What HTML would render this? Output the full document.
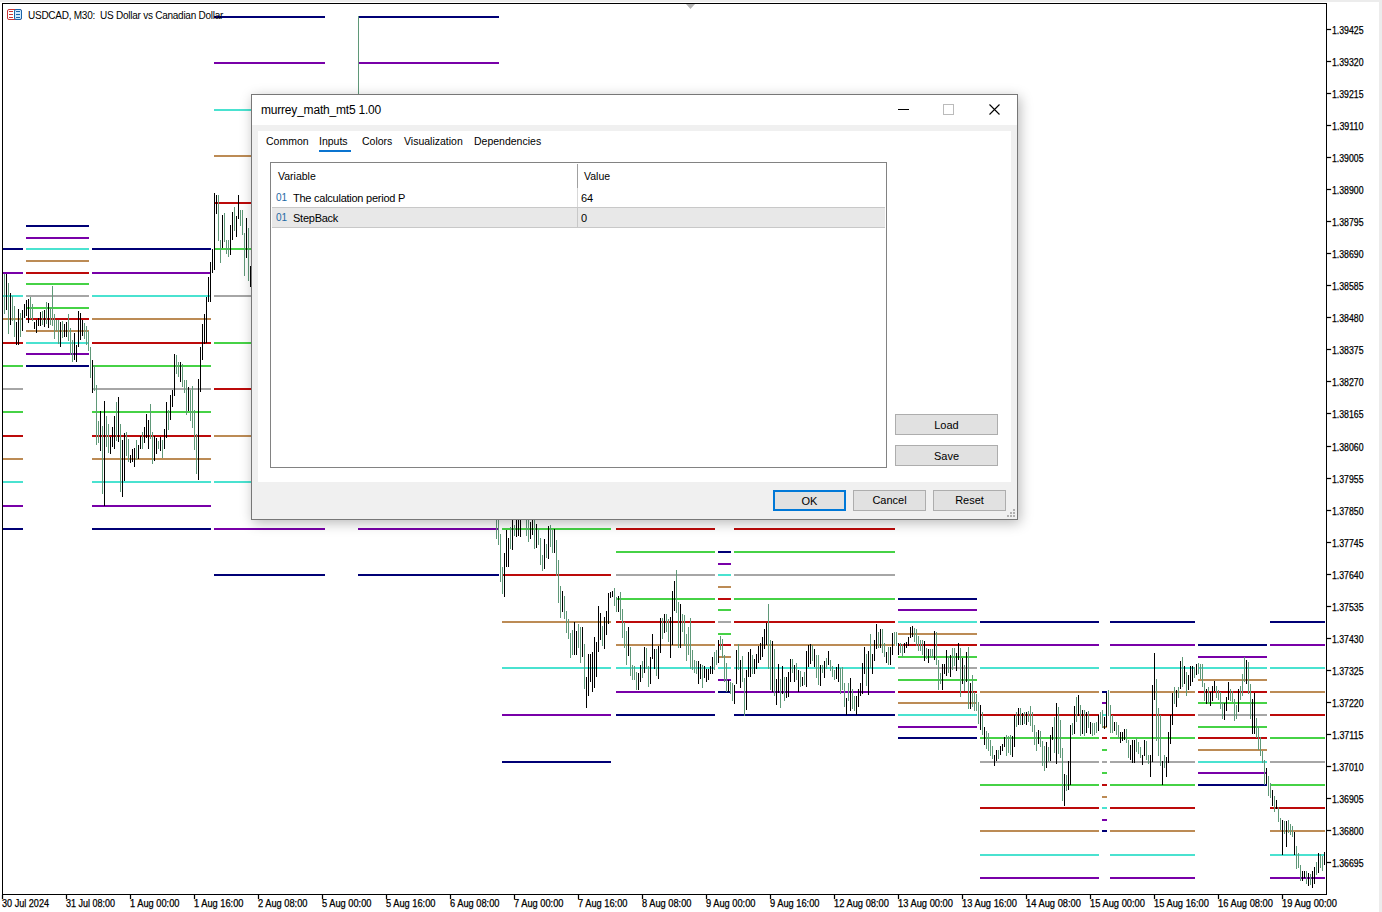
<!DOCTYPE html>
<html><head><meta charset="utf-8"><style>
html,body{margin:0;padding:0;}
body{width:1382px;height:912px;position:relative;overflow:hidden;background:#fff;font-family:"Liberation Sans",sans-serif;}
.t{position:absolute;white-space:pre;color:#000;line-height:1;}
.btn{position:absolute;box-sizing:content-box;background:#e1e1e1;border:1px solid #adadad;font-size:11px;text-align:center;line-height:19px;color:#000;}
</style></head><body>
<svg width="1382" height="912" style="position:absolute;left:0;top:0" shape-rendering="crispEdges">
<rect x="0" y="0" width="1382" height="912" fill="#fff"/>
<rect x="0" y="0" width="1382" height="2" fill="#ececec"/>
<rect x="1379" y="0" width="3" height="912" fill="#ececec"/>
<rect x="2" y="248" width="21" height="2" fill="#000075"/><rect x="2" y="272" width="21" height="2" fill="#7800a8"/><rect x="2" y="295" width="21" height="2" fill="#4ae2d0"/><rect x="2" y="318" width="21" height="2" fill="#bc8b55"/><rect x="2" y="342" width="21" height="2" fill="#bc0a0a"/><rect x="2" y="365" width="21" height="2" fill="#46d246"/><rect x="2" y="388" width="21" height="2" fill="#a6a6a6"/><rect x="2" y="411" width="21" height="2" fill="#46d246"/><rect x="2" y="435" width="21" height="2" fill="#bc0a0a"/><rect x="2" y="458" width="21" height="2" fill="#bc8b55"/><rect x="2" y="481" width="21" height="2" fill="#4ae2d0"/><rect x="2" y="505" width="21" height="2" fill="#7800a8"/><rect x="2" y="528" width="21" height="2" fill="#000075"/><rect x="26" y="225" width="63" height="2" fill="#000075"/><rect x="26" y="237" width="63" height="2" fill="#7800a8"/><rect x="26" y="248" width="63" height="2" fill="#4ae2d0"/><rect x="26" y="260" width="63" height="2" fill="#bc8b55"/><rect x="26" y="272" width="63" height="2" fill="#bc0a0a"/><rect x="26" y="283" width="63" height="2" fill="#46d246"/><rect x="26" y="295" width="63" height="2" fill="#a6a6a6"/><rect x="26" y="307" width="63" height="2" fill="#46d246"/><rect x="26" y="318" width="63" height="2" fill="#bc0a0a"/><rect x="26" y="330" width="63" height="2" fill="#bc8b55"/><rect x="26" y="342" width="63" height="2" fill="#4ae2d0"/><rect x="26" y="353" width="63" height="2" fill="#7800a8"/><rect x="26" y="365" width="63" height="2" fill="#000075"/><rect x="92" y="248" width="119" height="2" fill="#000075"/><rect x="92" y="272" width="119" height="2" fill="#7800a8"/><rect x="92" y="295" width="119" height="2" fill="#4ae2d0"/><rect x="92" y="318" width="119" height="2" fill="#bc8b55"/><rect x="92" y="342" width="119" height="2" fill="#bc0a0a"/><rect x="92" y="365" width="119" height="2" fill="#46d246"/><rect x="92" y="388" width="119" height="2" fill="#a6a6a6"/><rect x="92" y="411" width="119" height="2" fill="#46d246"/><rect x="92" y="435" width="119" height="2" fill="#bc0a0a"/><rect x="92" y="458" width="119" height="2" fill="#bc8b55"/><rect x="92" y="481" width="119" height="2" fill="#4ae2d0"/><rect x="92" y="505" width="119" height="2" fill="#7800a8"/><rect x="92" y="528" width="119" height="2" fill="#000075"/><rect x="214" y="16" width="111" height="2" fill="#000075"/><rect x="214" y="62" width="111" height="2" fill="#7800a8"/><rect x="214" y="109" width="111" height="2" fill="#4ae2d0"/><rect x="214" y="155" width="111" height="2" fill="#bc8b55"/><rect x="214" y="202" width="111" height="2" fill="#bc0a0a"/><rect x="214" y="248" width="111" height="2" fill="#46d246"/><rect x="214" y="295" width="111" height="2" fill="#a6a6a6"/><rect x="214" y="342" width="111" height="2" fill="#46d246"/><rect x="214" y="388" width="111" height="2" fill="#bc0a0a"/><rect x="214" y="435" width="111" height="2" fill="#bc8b55"/><rect x="214" y="481" width="111" height="2" fill="#4ae2d0"/><rect x="214" y="528" width="111" height="2" fill="#7800a8"/><rect x="214" y="574" width="111" height="2" fill="#000075"/><rect x="358" y="16" width="141" height="2" fill="#000075"/><rect x="358" y="62" width="141" height="2" fill="#7800a8"/><rect x="358" y="109" width="141" height="2" fill="#4ae2d0"/><rect x="358" y="155" width="141" height="2" fill="#bc8b55"/><rect x="358" y="202" width="141" height="2" fill="#bc0a0a"/><rect x="358" y="248" width="141" height="2" fill="#46d246"/><rect x="358" y="295" width="141" height="2" fill="#a6a6a6"/><rect x="358" y="342" width="141" height="2" fill="#46d246"/><rect x="358" y="388" width="141" height="2" fill="#bc0a0a"/><rect x="358" y="435" width="141" height="2" fill="#bc8b55"/><rect x="358" y="481" width="141" height="2" fill="#4ae2d0"/><rect x="358" y="528" width="141" height="2" fill="#7800a8"/><rect x="358" y="574" width="141" height="2" fill="#000075"/><rect x="502" y="202" width="109" height="2" fill="#000075"/><rect x="502" y="248" width="109" height="2" fill="#7800a8"/><rect x="502" y="295" width="109" height="2" fill="#4ae2d0"/><rect x="502" y="342" width="109" height="2" fill="#bc8b55"/><rect x="502" y="388" width="109" height="2" fill="#bc0a0a"/><rect x="502" y="435" width="109" height="2" fill="#46d246"/><rect x="502" y="481" width="109" height="2" fill="#a6a6a6"/><rect x="502" y="528" width="109" height="2" fill="#46d246"/><rect x="502" y="574" width="109" height="2" fill="#bc0a0a"/><rect x="502" y="621" width="109" height="2" fill="#bc8b55"/><rect x="502" y="667" width="109" height="2" fill="#4ae2d0"/><rect x="502" y="714" width="109" height="2" fill="#7800a8"/><rect x="502" y="761" width="109" height="2" fill="#000075"/><rect x="616" y="435" width="99" height="2" fill="#000075"/><rect x="616" y="458" width="99" height="2" fill="#7800a8"/><rect x="616" y="481" width="99" height="2" fill="#4ae2d0"/><rect x="616" y="505" width="99" height="2" fill="#bc8b55"/><rect x="616" y="528" width="99" height="2" fill="#bc0a0a"/><rect x="616" y="551" width="99" height="2" fill="#46d246"/><rect x="616" y="574" width="99" height="2" fill="#a6a6a6"/><rect x="616" y="598" width="99" height="2" fill="#46d246"/><rect x="616" y="621" width="99" height="2" fill="#bc0a0a"/><rect x="616" y="644" width="99" height="2" fill="#bc8b55"/><rect x="616" y="667" width="99" height="2" fill="#4ae2d0"/><rect x="616" y="691" width="99" height="2" fill="#7800a8"/><rect x="616" y="714" width="99" height="2" fill="#000075"/><rect x="718" y="551" width="13" height="2" fill="#000075"/><rect x="718" y="563" width="13" height="2" fill="#7800a8"/><rect x="718" y="574" width="13" height="2" fill="#4ae2d0"/><rect x="718" y="586" width="13" height="2" fill="#bc8b55"/><rect x="718" y="598" width="13" height="2" fill="#bc0a0a"/><rect x="718" y="609" width="13" height="2" fill="#46d246"/><rect x="718" y="621" width="13" height="2" fill="#a6a6a6"/><rect x="718" y="633" width="13" height="2" fill="#46d246"/><rect x="718" y="644" width="13" height="2" fill="#bc0a0a"/><rect x="718" y="656" width="13" height="2" fill="#bc8b55"/><rect x="718" y="667" width="13" height="2" fill="#4ae2d0"/><rect x="718" y="679" width="13" height="2" fill="#7800a8"/><rect x="718" y="691" width="13" height="2" fill="#000075"/><rect x="734" y="435" width="161" height="2" fill="#000075"/><rect x="734" y="458" width="161" height="2" fill="#7800a8"/><rect x="734" y="481" width="161" height="2" fill="#4ae2d0"/><rect x="734" y="505" width="161" height="2" fill="#bc8b55"/><rect x="734" y="528" width="161" height="2" fill="#bc0a0a"/><rect x="734" y="551" width="161" height="2" fill="#46d246"/><rect x="734" y="574" width="161" height="2" fill="#a6a6a6"/><rect x="734" y="598" width="161" height="2" fill="#46d246"/><rect x="734" y="621" width="161" height="2" fill="#bc0a0a"/><rect x="734" y="644" width="161" height="2" fill="#bc8b55"/><rect x="734" y="667" width="161" height="2" fill="#4ae2d0"/><rect x="734" y="691" width="161" height="2" fill="#7800a8"/><rect x="734" y="714" width="161" height="2" fill="#000075"/><rect x="898" y="598" width="79" height="2" fill="#000075"/><rect x="898" y="609" width="79" height="2" fill="#7800a8"/><rect x="898" y="621" width="79" height="2" fill="#4ae2d0"/><rect x="898" y="633" width="79" height="2" fill="#bc8b55"/><rect x="898" y="644" width="79" height="2" fill="#bc0a0a"/><rect x="898" y="656" width="79" height="2" fill="#46d246"/><rect x="898" y="667" width="79" height="2" fill="#a6a6a6"/><rect x="898" y="679" width="79" height="2" fill="#46d246"/><rect x="898" y="691" width="79" height="2" fill="#bc0a0a"/><rect x="898" y="702" width="79" height="2" fill="#bc8b55"/><rect x="898" y="714" width="79" height="2" fill="#4ae2d0"/><rect x="898" y="726" width="79" height="2" fill="#7800a8"/><rect x="898" y="737" width="79" height="2" fill="#000075"/><rect x="980" y="621" width="119" height="2" fill="#000075"/><rect x="980" y="644" width="119" height="2" fill="#7800a8"/><rect x="980" y="667" width="119" height="2" fill="#4ae2d0"/><rect x="980" y="691" width="119" height="2" fill="#bc8b55"/><rect x="980" y="714" width="119" height="2" fill="#bc0a0a"/><rect x="980" y="737" width="119" height="2" fill="#46d246"/><rect x="980" y="761" width="119" height="2" fill="#a6a6a6"/><rect x="980" y="784" width="119" height="2" fill="#46d246"/><rect x="980" y="807" width="119" height="2" fill="#bc0a0a"/><rect x="980" y="830" width="119" height="2" fill="#bc8b55"/><rect x="980" y="854" width="119" height="2" fill="#4ae2d0"/><rect x="980" y="877" width="119" height="2" fill="#7800a8"/><rect x="1102" y="691" width="5" height="2" fill="#000075"/><rect x="1102" y="702" width="5" height="2" fill="#7800a8"/><rect x="1102" y="714" width="5" height="2" fill="#4ae2d0"/><rect x="1102" y="726" width="5" height="2" fill="#bc8b55"/><rect x="1102" y="737" width="5" height="2" fill="#bc0a0a"/><rect x="1102" y="749" width="5" height="2" fill="#46d246"/><rect x="1102" y="761" width="5" height="2" fill="#a6a6a6"/><rect x="1102" y="772" width="5" height="2" fill="#46d246"/><rect x="1102" y="784" width="5" height="2" fill="#bc0a0a"/><rect x="1102" y="796" width="5" height="2" fill="#bc8b55"/><rect x="1102" y="807" width="5" height="2" fill="#4ae2d0"/><rect x="1102" y="819" width="5" height="2" fill="#7800a8"/><rect x="1102" y="830" width="5" height="2" fill="#000075"/><rect x="1110" y="621" width="85" height="2" fill="#000075"/><rect x="1110" y="644" width="85" height="2" fill="#7800a8"/><rect x="1110" y="667" width="85" height="2" fill="#4ae2d0"/><rect x="1110" y="691" width="85" height="2" fill="#bc8b55"/><rect x="1110" y="714" width="85" height="2" fill="#bc0a0a"/><rect x="1110" y="737" width="85" height="2" fill="#46d246"/><rect x="1110" y="761" width="85" height="2" fill="#a6a6a6"/><rect x="1110" y="784" width="85" height="2" fill="#46d246"/><rect x="1110" y="807" width="85" height="2" fill="#bc0a0a"/><rect x="1110" y="830" width="85" height="2" fill="#bc8b55"/><rect x="1110" y="854" width="85" height="2" fill="#4ae2d0"/><rect x="1110" y="877" width="85" height="2" fill="#7800a8"/><rect x="1198" y="644" width="69" height="2" fill="#000075"/><rect x="1198" y="656" width="69" height="2" fill="#7800a8"/><rect x="1198" y="667" width="69" height="2" fill="#4ae2d0"/><rect x="1198" y="679" width="69" height="2" fill="#bc8b55"/><rect x="1198" y="691" width="69" height="2" fill="#bc0a0a"/><rect x="1198" y="702" width="69" height="2" fill="#46d246"/><rect x="1198" y="714" width="69" height="2" fill="#a6a6a6"/><rect x="1198" y="726" width="69" height="2" fill="#46d246"/><rect x="1198" y="737" width="69" height="2" fill="#bc0a0a"/><rect x="1198" y="749" width="69" height="2" fill="#bc8b55"/><rect x="1198" y="761" width="69" height="2" fill="#4ae2d0"/><rect x="1198" y="772" width="69" height="2" fill="#7800a8"/><rect x="1198" y="784" width="69" height="2" fill="#000075"/><rect x="1270" y="621" width="55" height="2" fill="#000075"/><rect x="1270" y="644" width="55" height="2" fill="#7800a8"/><rect x="1270" y="667" width="55" height="2" fill="#4ae2d0"/><rect x="1270" y="691" width="55" height="2" fill="#bc8b55"/><rect x="1270" y="714" width="55" height="2" fill="#bc0a0a"/><rect x="1270" y="737" width="55" height="2" fill="#46d246"/><rect x="1270" y="761" width="55" height="2" fill="#a6a6a6"/><rect x="1270" y="784" width="55" height="2" fill="#46d246"/><rect x="1270" y="807" width="55" height="2" fill="#bc0a0a"/><rect x="1270" y="830" width="55" height="2" fill="#bc8b55"/><rect x="1270" y="854" width="55" height="2" fill="#4ae2d0"/><rect x="1270" y="877" width="55" height="2" fill="#7800a8"/>
<path d="M4.5 274V314M8.5 283V334M12.5 296V321M14.5 306V337M20.5 313V337M30.5 297V319M32.5 304V321M42.5 311V325M46.5 302V324M50.5 308V325M52.5 286V326M54.5 314V339M56.5 320V331M58.5 320V344M62.5 321V338M68.5 314V341M70.5 328V355M72.5 340V362M84.5 323V339M86.5 326V345M88.5 331V351M90.5 347V378M94.5 365V391M96.5 385V445M98.5 421V443M102.5 426V494M106.5 416V447M108.5 424V453M116.5 402V441M120.5 424V492M126.5 432V456M128.5 439V462M136.5 440V460M142.5 432V449M150.5 404V439M152.5 432V464M158.5 441V449M162.5 440V458M168.5 410V430M176.5 355V374M178.5 362V377M182.5 364V387M184.5 380V393M186.5 380V415M190.5 390V421M192.5 386V428M194.5 410V450M196.5 434V474M218.5 195V241M220.5 240V263M224.5 213V242M226.5 240V254M228.5 240V257M234.5 207V231M240.5 210V226M242.5 210V235M244.5 233V276M248.5 228V281M358.5 16V301M496.5 480V539M498.5 480V545M500.5 534V582M502.5 567V594M510.5 527V549M514.5 525V536M522.5 480V516M526.5 500V536M528.5 500V542M534.5 500V549M538.5 528V545M540.5 538V565M542.5 555V571M546.5 544V558M550.5 525V547M552.5 530V553M556.5 540V576M558.5 560V603M560.5 586V618M564.5 596V619M566.5 611V633M568.5 619V639M570.5 633V658M572.5 630V655M578.5 624V648M580.5 627V663M584.5 644V689M602.5 626V646M614.5 588V606M616.5 597V612M620.5 592V620M622.5 609V638M624.5 622V648M626.5 631V665M630.5 647V676M632.5 665V680M634.5 666V680M636.5 672V690M642.5 661V678M646.5 648V669M648.5 666V687M656.5 649V676M662.5 618V639M666.5 614V632M668.5 619V642M676.5 570V613M678.5 602V648M682.5 614V632M684.5 615V646M686.5 634V661M688.5 627V655M690.5 618V669M692.5 650V670M694.5 660V673M696.5 661V674M702.5 665V688M714.5 652V670M716.5 650V665M720.5 636V650M722.5 639V658M724.5 655V682M726.5 663V692M730.5 682V694M732.5 683V701M738.5 644V670M742.5 656V682M744.5 678V716M752.5 655V674M768.5 604V669M770.5 640V690M774.5 649V696M780.5 679V708M784.5 677V701M792.5 659V673M796.5 663V680M800.5 671V687M804.5 672V685M812.5 645V661M816.5 655V678M818.5 655V685M822.5 665V673M826.5 658V669M830.5 660V671M832.5 666V677M834.5 670V680M840.5 668V694M842.5 667V690M844.5 683V707M848.5 683V701M852.5 689V709M854.5 696V711M866.5 654V686M870.5 634V668M878.5 632V648M882.5 629V653M884.5 643V657M888.5 647V665M894.5 632V644M896.5 632V646M900.5 643V653M902.5 644V657M914.5 628V642M916.5 629V646M918.5 636V651M920.5 640V651M922.5 640V655M926.5 648V659M930.5 649V658M932.5 649V657M936.5 632V665M938.5 660V690M940.5 673V684M948.5 656V673M952.5 648V670M954.5 648V666M960.5 648V697M964.5 665V691M968.5 647V709M972.5 675V707M974.5 692V711M976.5 694V711M978.5 702V724M982.5 712V735M986.5 731V749M988.5 733V751M990.5 740V756M992.5 746V759M998.5 750V759M1006.5 735V756M1008.5 736V753M1010.5 735V755M1016.5 712V727M1020.5 708V725M1024.5 712V724M1028.5 711V722M1030.5 706V726M1032.5 712V732M1034.5 725V745M1036.5 732V751M1040.5 731V747M1042.5 741V766M1044.5 746V771M1048.5 747V762M1054.5 717V753M1058.5 707V754M1060.5 720V758M1062.5 748V801M1066.5 775V791M1072.5 723V735M1076.5 697V722M1080.5 705V736M1084.5 710V736M1088.5 711V728M1092.5 723V736M1094.5 723V735M1096.5 722V733M1100.5 712V724M1102.5 710V728M1108.5 690V716M1110.5 705V733M1112.5 715V733M1116.5 722V735M1118.5 725V739M1126.5 729V743M1128.5 740V758M1136.5 738V752M1138.5 742V754M1140.5 747V758M1146.5 741V760M1148.5 755V764M1156.5 679V741M1158.5 708V756M1160.5 715V766M1164.5 755V768M1174.5 687V704M1178.5 687V698M1182.5 657V687M1186.5 672V696M1194.5 667V678M1198.5 663V674M1200.5 664V679M1202.5 664V687M1204.5 683V701M1208.5 687V703M1216.5 686V698M1218.5 690V700M1220.5 692V709M1222.5 702V719M1230.5 689V701M1232.5 691V702M1234.5 699V721M1236.5 705V719M1240.5 686V700M1242.5 674V696M1244.5 657V682M1248.5 662V694M1250.5 684V719M1256.5 718V738M1258.5 726V750M1260.5 737V756M1262.5 751V763M1264.5 760V785M1268.5 776V796M1270.5 783V798M1274.5 796V812M1278.5 807V822M1280.5 818V830M1284.5 821V834M1288.5 820V833M1290.5 824V835M1292.5 826V837M1296.5 846V869M1298.5 853V868M1300.5 865V881M1306.5 871V884M1310.5 874V885M1316.5 862V875M1320.5 854V868M1322.5 856V871" stroke="#5f9878" stroke-width="1" fill="none"/><path d="M6.5 274V310M10.5 293V325M16.5 322V345M18.5 309V345M22.5 310V331M24.5 304V318M26.5 300V316M28.5 299V323M34.5 322V329M36.5 320V333M38.5 318V326M40.5 312V326M44.5 310V327M48.5 303V328M60.5 322V347M64.5 324V337M66.5 322V337M74.5 333V360M76.5 345V362M78.5 311V347M80.5 313V340M82.5 320V336M92.5 360V393M100.5 411V451M104.5 401V506M110.5 437V454M112.5 427V447M114.5 416V449M118.5 397V442M122.5 440V497M124.5 433V481M130.5 455V463M132.5 449V462M134.5 448V467M138.5 445V459M140.5 436V449M144.5 427V443M146.5 414V438M148.5 420V449M154.5 436V461M156.5 438V454M160.5 437V451M164.5 429V449M166.5 402V438M170.5 395V420M172.5 390V407M174.5 354V396M180.5 362V382M188.5 387V411M198.5 379V480M200.5 347V392M202.5 324V360M204.5 314V344M206.5 297V343M208.5 277V302M210.5 262V302M212.5 249V273M214.5 193V270M216.5 195V214M222.5 215V248M230.5 225V255M232.5 212V240M236.5 216V237M238.5 195V219M246.5 218V258M250.5 266V287M504.5 553V597M506.5 530V567M508.5 538V567M512.5 500V550M516.5 500V537M518.5 500V536M520.5 500V537M524.5 480V516M530.5 522V539M532.5 500V535M536.5 524V548M544.5 539V569M548.5 526V559M554.5 529V553M562.5 591V612M574.5 622V655M576.5 631V655M582.5 627V657M586.5 677V708M588.5 654V696M590.5 654V682M592.5 652V692M594.5 637V688M596.5 642V677M598.5 606V652M600.5 613V640M604.5 617V649M606.5 611V635M608.5 593V624M610.5 592V598M612.5 591V597M618.5 596V612M628.5 627V656M638.5 673V690M640.5 665V682M644.5 647V673M650.5 657V684M652.5 634V659M654.5 649V669M658.5 646V679M660.5 618V653M664.5 614V633M670.5 617V658M672.5 591V645M674.5 581V611M680.5 604V648M698.5 661V684M700.5 664V679M704.5 666V678M706.5 669V682M708.5 669V680M710.5 666V674M712.5 657V674M718.5 640V663M728.5 680V692M734.5 685V704M736.5 650V684M740.5 660V688M746.5 670V710M748.5 652V677M750.5 649V677M754.5 659V674M756.5 654V669M758.5 646V663M760.5 643V660M762.5 637V657M764.5 629V649M766.5 623V645M772.5 641V692M776.5 679V705M778.5 664V693M782.5 666V694M786.5 677V698M788.5 672V697M790.5 659V682M794.5 665V682M798.5 670V692M802.5 677V686M806.5 651V687M808.5 645V667M810.5 644V664M814.5 649V667M820.5 665V686M824.5 661V678M828.5 651V665M836.5 667V679M838.5 664V682M846.5 698V715M850.5 678V711M856.5 696V715M858.5 689V707M860.5 683V696M862.5 663V694M864.5 647V674M868.5 651V695M872.5 654V674M874.5 640V661M876.5 624V649M880.5 629V648M886.5 652V663M890.5 647V665M892.5 633V655M898.5 643V655M904.5 643V653M906.5 642V648M908.5 637V646M910.5 627V638M912.5 626V637M924.5 641V661M928.5 649V663M934.5 631V660M942.5 664V690M944.5 664V674M946.5 650V676M950.5 655V677M956.5 653V671M958.5 643V660M962.5 658V684M966.5 652V682M970.5 683V709M980.5 705V730M984.5 727V745M994.5 755V766M996.5 750V761M1000.5 746V755M1002.5 744V751M1004.5 737V747M1012.5 736V757M1014.5 715V747M1018.5 708V725M1022.5 713V725M1026.5 712V725M1038.5 730V744M1046.5 742V768M1050.5 735V761M1052.5 727V740M1056.5 703V764M1064.5 774V806M1068.5 761V790M1070.5 725V785M1074.5 706V734M1078.5 695V716M1082.5 710V734M1086.5 712V733M1090.5 722V734M1098.5 715V731M1104.5 717V729M1106.5 693V727M1114.5 722V731M1120.5 732V743M1122.5 732V741M1124.5 729V740M1130.5 745V760M1132.5 740V763M1134.5 740V763M1142.5 755V765M1144.5 740V756M1150.5 755V777M1152.5 685V762M1154.5 653V700M1162.5 761V785M1166.5 757V777M1168.5 732V763M1170.5 715V744M1172.5 693V725M1176.5 690V707M1180.5 661V689M1184.5 666V684M1188.5 675V690M1190.5 666V686M1192.5 666V682M1196.5 664V675M1206.5 689V704M1210.5 692V706M1212.5 686V701M1214.5 681V691M1224.5 703V720M1226.5 697V711M1228.5 682V700M1238.5 689V712M1246.5 660V684M1252.5 699V734M1254.5 693V734M1266.5 768V784M1272.5 790V806M1276.5 800V809M1282.5 820V855M1286.5 821V847M1294.5 832V855M1302.5 871V881M1304.5 871V878M1308.5 873V886M1312.5 871V888M1314.5 867V884M1318.5 853V873M1324.5 852V865" stroke="#000" stroke-width="1" fill="none"/>
<rect x="2" y="3" width="1325" height="1" fill="#000"/>
<polygon points="686,4 695,4 690.5,9" fill="#b4b4b4" shape-rendering="auto"/>
<rect x="2" y="3" width="1" height="892" fill="#000"/>
<rect x="1326" y="3" width="1" height="892" fill="#000"/>
<rect x="2" y="894" width="1325" height="1" fill="#000"/>
<g font-family="Liberation Sans" font-size="10" fill="#000" stroke="#000" stroke-width="0.25" shape-rendering="auto"><rect x="1327" y="29" width="4" height="1" fill="#000"/><text x="1332" y="34" textLength="31.5" lengthAdjust="spacingAndGlyphs">1.39425</text><rect x="1327" y="61" width="4" height="1" fill="#000"/><text x="1332" y="66" textLength="31.5" lengthAdjust="spacingAndGlyphs">1.39320</text><rect x="1327" y="93" width="4" height="1" fill="#000"/><text x="1332" y="98" textLength="31.5" lengthAdjust="spacingAndGlyphs">1.39215</text><rect x="1327" y="125" width="4" height="1" fill="#000"/><text x="1332" y="130" textLength="31.5" lengthAdjust="spacingAndGlyphs">1.39110</text><rect x="1327" y="157" width="4" height="1" fill="#000"/><text x="1332" y="162" textLength="31.5" lengthAdjust="spacingAndGlyphs">1.39005</text><rect x="1327" y="189" width="4" height="1" fill="#000"/><text x="1332" y="194" textLength="31.5" lengthAdjust="spacingAndGlyphs">1.38900</text><rect x="1327" y="221" width="4" height="1" fill="#000"/><text x="1332" y="226" textLength="31.5" lengthAdjust="spacingAndGlyphs">1.38795</text><rect x="1327" y="253" width="4" height="1" fill="#000"/><text x="1332" y="258" textLength="31.5" lengthAdjust="spacingAndGlyphs">1.38690</text><rect x="1327" y="285" width="4" height="1" fill="#000"/><text x="1332" y="290" textLength="31.5" lengthAdjust="spacingAndGlyphs">1.38585</text><rect x="1327" y="317" width="4" height="1" fill="#000"/><text x="1332" y="322" textLength="31.5" lengthAdjust="spacingAndGlyphs">1.38480</text><rect x="1327" y="349" width="4" height="1" fill="#000"/><text x="1332" y="354" textLength="31.5" lengthAdjust="spacingAndGlyphs">1.38375</text><rect x="1327" y="381" width="4" height="1" fill="#000"/><text x="1332" y="386" textLength="31.5" lengthAdjust="spacingAndGlyphs">1.38270</text><rect x="1327" y="413" width="4" height="1" fill="#000"/><text x="1332" y="418" textLength="31.5" lengthAdjust="spacingAndGlyphs">1.38165</text><rect x="1327" y="446" width="4" height="1" fill="#000"/><text x="1332" y="451" textLength="31.5" lengthAdjust="spacingAndGlyphs">1.38060</text><rect x="1327" y="478" width="4" height="1" fill="#000"/><text x="1332" y="483" textLength="31.5" lengthAdjust="spacingAndGlyphs">1.37955</text><rect x="1327" y="510" width="4" height="1" fill="#000"/><text x="1332" y="515" textLength="31.5" lengthAdjust="spacingAndGlyphs">1.37850</text><rect x="1327" y="542" width="4" height="1" fill="#000"/><text x="1332" y="547" textLength="31.5" lengthAdjust="spacingAndGlyphs">1.37745</text><rect x="1327" y="574" width="4" height="1" fill="#000"/><text x="1332" y="579" textLength="31.5" lengthAdjust="spacingAndGlyphs">1.37640</text><rect x="1327" y="606" width="4" height="1" fill="#000"/><text x="1332" y="611" textLength="31.5" lengthAdjust="spacingAndGlyphs">1.37535</text><rect x="1327" y="638" width="4" height="1" fill="#000"/><text x="1332" y="643" textLength="31.5" lengthAdjust="spacingAndGlyphs">1.37430</text><rect x="1327" y="670" width="4" height="1" fill="#000"/><text x="1332" y="675" textLength="31.5" lengthAdjust="spacingAndGlyphs">1.37325</text><rect x="1327" y="702" width="4" height="1" fill="#000"/><text x="1332" y="707" textLength="31.5" lengthAdjust="spacingAndGlyphs">1.37220</text><rect x="1327" y="734" width="4" height="1" fill="#000"/><text x="1332" y="739" textLength="31.5" lengthAdjust="spacingAndGlyphs">1.37115</text><rect x="1327" y="766" width="4" height="1" fill="#000"/><text x="1332" y="771" textLength="31.5" lengthAdjust="spacingAndGlyphs">1.37010</text><rect x="1327" y="798" width="4" height="1" fill="#000"/><text x="1332" y="803" textLength="31.5" lengthAdjust="spacingAndGlyphs">1.36905</text><rect x="1327" y="830" width="4" height="1" fill="#000"/><text x="1332" y="835" textLength="31.5" lengthAdjust="spacingAndGlyphs">1.36800</text><rect x="1327" y="862" width="4" height="1" fill="#000"/><text x="1332" y="867" textLength="31.5" lengthAdjust="spacingAndGlyphs">1.36695</text></g>
<g font-family="Liberation Sans" font-size="10" fill="#000" stroke="#000" stroke-width="0.25" shape-rendering="auto"><rect x="2" y="895" width="1" height="4" fill="#000"/><text x="2" y="907" textLength="47" lengthAdjust="spacingAndGlyphs">30 Jul 2024</text><rect x="66" y="895" width="1" height="4" fill="#000"/><text x="66" y="907" textLength="49" lengthAdjust="spacingAndGlyphs">31 Jul 08:00</text><rect x="130" y="895" width="1" height="4" fill="#000"/><text x="130" y="907" textLength="49.5" lengthAdjust="spacingAndGlyphs">1 Aug 00:00</text><rect x="194" y="895" width="1" height="4" fill="#000"/><text x="194" y="907" textLength="49.5" lengthAdjust="spacingAndGlyphs">1 Aug 16:00</text><rect x="258" y="895" width="1" height="4" fill="#000"/><text x="258" y="907" textLength="49.5" lengthAdjust="spacingAndGlyphs">2 Aug 08:00</text><rect x="322" y="895" width="1" height="4" fill="#000"/><text x="322" y="907" textLength="49.5" lengthAdjust="spacingAndGlyphs">5 Aug 00:00</text><rect x="386" y="895" width="1" height="4" fill="#000"/><text x="386" y="907" textLength="49.5" lengthAdjust="spacingAndGlyphs">5 Aug 16:00</text><rect x="450" y="895" width="1" height="4" fill="#000"/><text x="450" y="907" textLength="49.5" lengthAdjust="spacingAndGlyphs">6 Aug 08:00</text><rect x="514" y="895" width="1" height="4" fill="#000"/><text x="514" y="907" textLength="49.5" lengthAdjust="spacingAndGlyphs">7 Aug 00:00</text><rect x="578" y="895" width="1" height="4" fill="#000"/><text x="578" y="907" textLength="49.5" lengthAdjust="spacingAndGlyphs">7 Aug 16:00</text><rect x="642" y="895" width="1" height="4" fill="#000"/><text x="642" y="907" textLength="49.5" lengthAdjust="spacingAndGlyphs">8 Aug 08:00</text><rect x="706" y="895" width="1" height="4" fill="#000"/><text x="706" y="907" textLength="49.5" lengthAdjust="spacingAndGlyphs">9 Aug 00:00</text><rect x="770" y="895" width="1" height="4" fill="#000"/><text x="770" y="907" textLength="49.5" lengthAdjust="spacingAndGlyphs">9 Aug 16:00</text><rect x="834" y="895" width="1" height="4" fill="#000"/><text x="834" y="907" textLength="55" lengthAdjust="spacingAndGlyphs">12 Aug 08:00</text><rect x="898" y="895" width="1" height="4" fill="#000"/><text x="898" y="907" textLength="55" lengthAdjust="spacingAndGlyphs">13 Aug 00:00</text><rect x="962" y="895" width="1" height="4" fill="#000"/><text x="962" y="907" textLength="55" lengthAdjust="spacingAndGlyphs">13 Aug 16:00</text><rect x="1026" y="895" width="1" height="4" fill="#000"/><text x="1026" y="907" textLength="55" lengthAdjust="spacingAndGlyphs">14 Aug 08:00</text><rect x="1090" y="895" width="1" height="4" fill="#000"/><text x="1090" y="907" textLength="55" lengthAdjust="spacingAndGlyphs">15 Aug 00:00</text><rect x="1154" y="895" width="1" height="4" fill="#000"/><text x="1154" y="907" textLength="55" lengthAdjust="spacingAndGlyphs">15 Aug 16:00</text><rect x="1218" y="895" width="1" height="4" fill="#000"/><text x="1218" y="907" textLength="55" lengthAdjust="spacingAndGlyphs">16 Aug 08:00</text><rect x="1282" y="895" width="1" height="4" fill="#000"/><text x="1282" y="907" textLength="55" lengthAdjust="spacingAndGlyphs">19 Aug 00:00</text></g>
</svg>
<svg width="16" height="12" style="position:absolute;left:7px;top:9px" viewBox="0 0 16 12">
<rect x="0.5" y="0.5" width="14" height="10" rx="1.5" fill="#fff" stroke="#c83434"/>
<rect x="7.5" y="0.5" width="7" height="10" rx="1.5" fill="#cfeaff" stroke="#1a64a8"/>
<g stroke="#c83434" stroke-width="1"><line x1="2" y1="2.5" x2="6" y2="2.5"/><line x1="2" y1="5.5" x2="6" y2="5.5"/><line x1="2" y1="8.5" x2="6" y2="8.5"/></g>
<g stroke="#1a64a8" stroke-width="1"><line x1="9" y1="2.5" x2="13" y2="2.5"/><line x1="9" y1="5.5" x2="13" y2="5.5"/><line x1="9" y1="8.5" x2="13" y2="8.5"/></g>
</svg>
<div class="t" style="left:28px;top:11px;font-size:10px;letter-spacing:-0.25px">USDCAD, M30:  US Dollar vs Canadian Dollar</div>

<div id="dlg" style="position:absolute;left:251px;top:94px;width:765px;height:424px;border:1px solid #777;background:#f0f0f0;box-shadow:2px 3px 12px rgba(0,0,0,0.28);">
  <div style="position:absolute;left:0;top:0;width:765px;height:30px;background:#fff;"></div>
  <div class="t" style="left:9px;top:9px;font-size:12px;letter-spacing:-0.2px;">murrey_math_mt5 1.00</div>
  <div style="position:absolute;left:646px;top:14px;width:11px;height:1px;background:#000"></div>
  <div style="position:absolute;left:691px;top:9px;width:9px;height:9px;border:1px solid #bbb"></div>
  <svg style="position:absolute;left:737px;top:9px" width="11" height="11"><path d="M0.5 0.5 L10.5 10.5 M10.5 0.5 L0.5 10.5" stroke="#000" stroke-width="1.1"/></svg>
  <div style="position:absolute;left:6px;top:36px;width:753px;height:351px;background:#fff;"></div>
  <div class="t" style="left:14px;top:41px;font-size:10.5px">Common</div>
  <div class="t" style="left:67px;top:41px;font-size:10.5px">Inputs</div>
  <div style="position:absolute;left:67px;top:55px;width:32px;height:2px;background:#0a74d0"></div>
  <div class="t" style="left:110px;top:41px;font-size:10.5px">Colors</div>
  <div class="t" style="left:152px;top:41px;font-size:10.5px">Visualization</div>
  <div class="t" style="left:222px;top:41px;font-size:10.5px">Dependencies</div>
  <div style="position:absolute;left:18px;top:67px;width:615px;height:304px;border:1px solid #828282;background:#fff"></div>
  <div style="position:absolute;left:325px;top:69px;width:1px;height:24px;background:#a0a0a0"></div>
  <div style="position:absolute;left:325px;top:93px;width:1px;height:19px;background:#d8d8d8"></div>
  <div style="position:absolute;left:20px;top:112px;width:613px;height:19px;background:#e8e8e8;border-top:1px solid #c8c8c8;border-bottom:1px solid #c8c8c8"></div>
  <div style="position:absolute;left:325px;top:112px;width:1px;height:21px;background:#c8c8c8"></div>
  <div class="t" style="left:26px;top:76px;font-size:10.5px">Variable</div>
  <div class="t" style="left:332px;top:76px;font-size:10.5px">Value</div>
  <div class="t" style="left:24px;top:98px;font-size:10px;color:#1f6aa5">01</div>
  <div class="t" style="left:41px;top:98px;font-size:11px;letter-spacing:-0.25px">The calculation period P</div>
  <div class="t" style="left:329px;top:98px;font-size:11px">64</div>
  <div class="t" style="left:24px;top:118px;font-size:10px;color:#1f6aa5">01</div>
  <div class="t" style="left:41px;top:118px;font-size:11px;letter-spacing:-0.25px">StepBack</div>
  <div class="t" style="left:329px;top:118px;font-size:11px">0</div>
  <div class="btn" style="left:643px;top:319px;width:101px;height:19px;line-height:21px">Load</div>
  <div class="btn" style="left:643px;top:350px;width:101px;height:19px;line-height:21px">Save</div>
  <div class="btn" style="left:521px;top:395px;width:69px;height:17px;border:2px solid #0078d7">OK</div>
  <div class="btn" style="left:601px;top:395px;width:71px;height:19px;">Cancel</div>
  <div class="btn" style="left:681px;top:395px;width:71px;height:19px;">Reset</div>
  <div style="position:absolute;left:761px;top:414px;width:2px;height:2px;background:#b0b0b0"></div>
  <div style="position:absolute;left:758px;top:417px;width:2px;height:2px;background:#b0b0b0"></div>
  <div style="position:absolute;left:761px;top:417px;width:2px;height:2px;background:#b0b0b0"></div>
  <div style="position:absolute;left:755px;top:420px;width:2px;height:2px;background:#b0b0b0"></div>
  <div style="position:absolute;left:758px;top:420px;width:2px;height:2px;background:#b0b0b0"></div>
  <div style="position:absolute;left:761px;top:420px;width:2px;height:2px;background:#b0b0b0"></div>
</div>

</body></html>
